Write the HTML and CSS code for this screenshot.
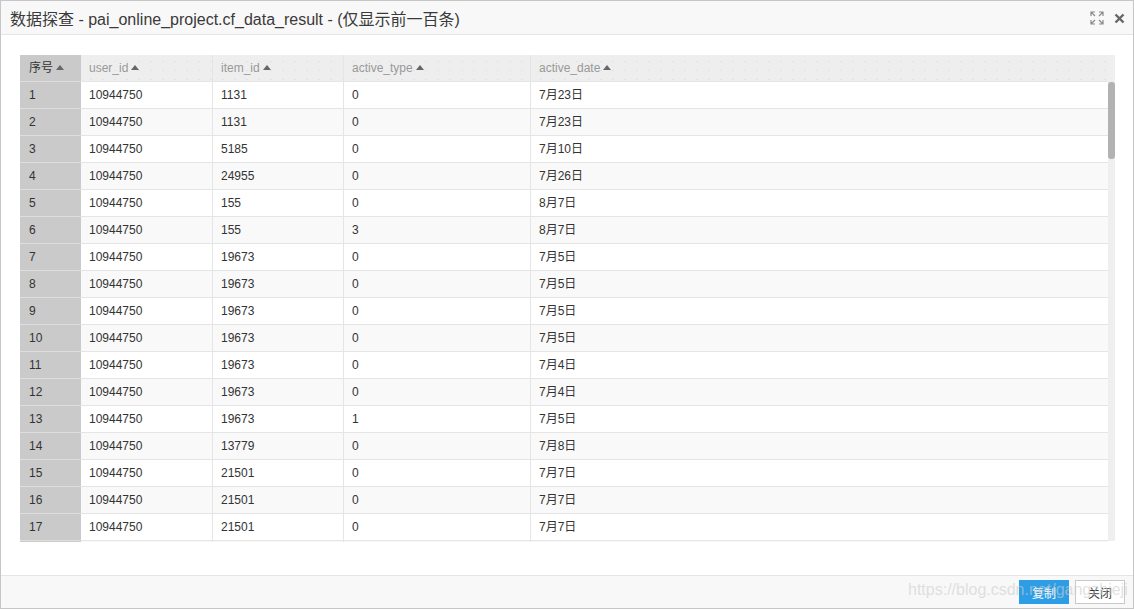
FILE: index.html
```html
<!DOCTYPE html>
<html lang="zh-CN">
<head>
    <meta charset="UTF-8">
    <title>数据探查</title>
    <link rel="stylesheet" href="styles.css">
</head>
<body>
    <div class="dialog">
        <div class="title">
            <span class="title-text">数据探查 - pai_online_project.cf_data_result - (仅显示前一百条)</span>
            <div class="title-tools">
                <svg class="ico-max" width="14" height="14" viewBox="0 0 14 14">
                    <path d="M1 5V1h4M1 1l4 4M9 1h4v4M13 1l-4 4M1 9v4h4M1 13l4-4M13 9v4h-4M13 13l-4-4" fill="none" stroke="#8a8a8a" stroke-width="1.2"/>
                </svg>
                <svg class="ico-close" width="11" height="11" viewBox="0 0 11 11">
                    <path d="M1.5 1.5l8 8M9.5 1.5l-8 8" fill="none" stroke="#666" stroke-width="2.4"/>
                </svg>
            </div>
        </div>
        <div class="body">
            <div class="grid-wrap">
                <div class="grid">
                    <div class="row head">
                        <div class="cell c1">序号<i class="sort"></i></div>
                        <div class="cell c2">user_id<i class="sort"></i></div>
                        <div class="cell c3">item_id<i class="sort"></i></div>
                        <div class="cell c4">active_type<i class="sort"></i></div>
                        <div class="cell c5">active_date<i class="sort"></i></div>
                    </div>
                    <div class="row"><div class="cell c1">1</div><div class="cell c2">10944750</div><div class="cell c3">1131</div><div class="cell c4">0</div><div class="cell c5">7月23日</div></div>
                    <div class="row"><div class="cell c1">2</div><div class="cell c2">10944750</div><div class="cell c3">1131</div><div class="cell c4">0</div><div class="cell c5">7月23日</div></div>
                    <div class="row"><div class="cell c1">3</div><div class="cell c2">10944750</div><div class="cell c3">5185</div><div class="cell c4">0</div><div class="cell c5">7月10日</div></div>
                    <div class="row"><div class="cell c1">4</div><div class="cell c2">10944750</div><div class="cell c3">24955</div><div class="cell c4">0</div><div class="cell c5">7月26日</div></div>
                    <div class="row"><div class="cell c1">5</div><div class="cell c2">10944750</div><div class="cell c3">155</div><div class="cell c4">0</div><div class="cell c5">8月7日</div></div>
                    <div class="row"><div class="cell c1">6</div><div class="cell c2">10944750</div><div class="cell c3">155</div><div class="cell c4">3</div><div class="cell c5">8月7日</div></div>
                    <div class="row"><div class="cell c1">7</div><div class="cell c2">10944750</div><div class="cell c3">19673</div><div class="cell c4">0</div><div class="cell c5">7月5日</div></div>
                    <div class="row"><div class="cell c1">8</div><div class="cell c2">10944750</div><div class="cell c3">19673</div><div class="cell c4">0</div><div class="cell c5">7月5日</div></div>
                    <div class="row"><div class="cell c1">9</div><div class="cell c2">10944750</div><div class="cell c3">19673</div><div class="cell c4">0</div><div class="cell c5">7月5日</div></div>
                    <div class="row"><div class="cell c1">10</div><div class="cell c2">10944750</div><div class="cell c3">19673</div><div class="cell c4">0</div><div class="cell c5">7月5日</div></div>
                    <div class="row"><div class="cell c1">11</div><div class="cell c2">10944750</div><div class="cell c3">19673</div><div class="cell c4">0</div><div class="cell c5">7月4日</div></div>
                    <div class="row"><div class="cell c1">12</div><div class="cell c2">10944750</div><div class="cell c3">19673</div><div class="cell c4">0</div><div class="cell c5">7月4日</div></div>
                    <div class="row"><div class="cell c1">13</div><div class="cell c2">10944750</div><div class="cell c3">19673</div><div class="cell c4">1</div><div class="cell c5">7月5日</div></div>
                    <div class="row"><div class="cell c1">14</div><div class="cell c2">10944750</div><div class="cell c3">13779</div><div class="cell c4">0</div><div class="cell c5">7月8日</div></div>
                    <div class="row"><div class="cell c1">15</div><div class="cell c2">10944750</div><div class="cell c3">21501</div><div class="cell c4">0</div><div class="cell c5">7月7日</div></div>
                    <div class="row"><div class="cell c1">16</div><div class="cell c2">10944750</div><div class="cell c3">21501</div><div class="cell c4">0</div><div class="cell c5">7月7日</div></div>
                    <div class="row"><div class="cell c1">17</div><div class="cell c2">10944750</div><div class="cell c3">21501</div><div class="cell c4">0</div><div class="cell c5">7月7日</div></div>
                    <div class="row"><div class="cell c1"></div><div class="cell c2"></div><div class="cell c3"></div><div class="cell c4"></div><div class="cell c5"></div></div>
                </div>
                <div class="scroll"><div class="thumb"></div></div>
            </div>
        </div>
        <div class="footer">
            <button class="btn btn-blue">复制</button>
            <button class="btn">关闭</button>
            <span class="mark">https://blog.csdn.net/gangzhieji</span>
        </div>
    </div>
</body>
</html>
```

FILE: styles.css
```css
body{
    margin: 0;
    padding: 0;
    font-family: "Liberation Sans", "Noto Sans CJK SC", sans-serif;
    color: #333;
}
.dialog{
    width: 1134px;
    height: 609px;
    box-sizing: border-box;
    border: 1px solid #c6c6c6;
    display: flex;
    flex-direction: column;
    background-color: #fff;
}
.title{
    height: 33px;
    border-bottom: 1px solid #e5e5e5;
    background-color: #f8f8f8;
    display: flex;
    align-items: center;
    padding: 0 8px 0 9px;
}
.title-text{
    flex: 1;
    font-size: 16px;
    color: #3a3a3a;
}
.title-tools{
    display: flex;
    align-items: center;
    gap: 10px;
}
.ico-max{
    display: block;
}
.ico-close{
    display: block;
    margin-top: 1px;
}
.body{
    flex: 1;
    padding: 20px 18px 0 19px;
}
.grid-wrap{
    display: flex;
    height: 487px;
    overflow: hidden;
}
.grid{
    width: 1088px;
}
.row{
    display: flex;
    height: 27px;
    background-color: #fff;
}
.row:nth-child(odd){
    background-color: #f9f9f9;
}
.cell{
    box-sizing: border-box;
    height: 27px;
    line-height: 26px;
    padding-left: 8px;
    font-size: 12px;
    color: #333;
    border-right: 1px solid #e5e5e5;
    border-bottom: 1px solid #e5e5e5;
    white-space: nowrap;
}
.cell.c1{
    width: 61px;
    background-color: #cacaca;
    border-right: none;
    border-bottom-color: #dedede;
    padding-left: 9px;
}
.c2{
    width: 132px;
}
.c3{
    width: 131px;
}
.c4{
    width: 187px;
}
.c5{
    width: 577px;
    border-right: none;
}
.row.head{
    background-color: #eee;
}
.head .cell{
    color: #999;
    background-image: radial-gradient(#e3e3e3 0.6px, transparent 0.8px);
    background-size: 12px 9px;
    background-position: 4px 2px;
}
.head .cell.c1{
    color: #333;
    background-image: none;
}
.sort{
    display: inline-block;
    width: 0;
    height: 0;
    border-left: 4px solid transparent;
    border-right: 4px solid transparent;
    border-bottom: 5px solid #666;
    margin-left: 3px;
    vertical-align: 2px;
}
.scroll{
    width: 7px;
    height: 486px;
    background-color: #efefef;
    padding-top: 27px;
    box-sizing: border-box;
}
.thumb{
    width: 7px;
    height: 77px;
    background-color: #b2b2b2;
    border-radius: 3px;
}
.footer{
    height: 32px;
    border-top: 1px solid #e5e5e5;
    background-color: #f8f8f8;
    display: flex;
    align-items: center;
    justify-content: flex-end;
    gap: 6px;
    padding-right: 8px;
    position: relative;
}
.btn{
    width: 50px;
    height: 24px;
    padding: 0;
    font-size: 12px;
    font-family: "Liberation Sans", "Noto Sans CJK SC", sans-serif;
    color: #333;
    background-color: #fff;
    border: 1px solid #c8c8c8;
    outline: none;
}
.btn-blue{
    color: #fff;
    background-color: #2d9de6;
    border-color: #2d9de6;
}
.mark{
    position: absolute;
    left: 907px;
    top: 5px;
    font-size: 16px;
    color: rgba(205, 205, 205, 0.6);
    pointer-events: none;
    white-space: nowrap;
}
```
